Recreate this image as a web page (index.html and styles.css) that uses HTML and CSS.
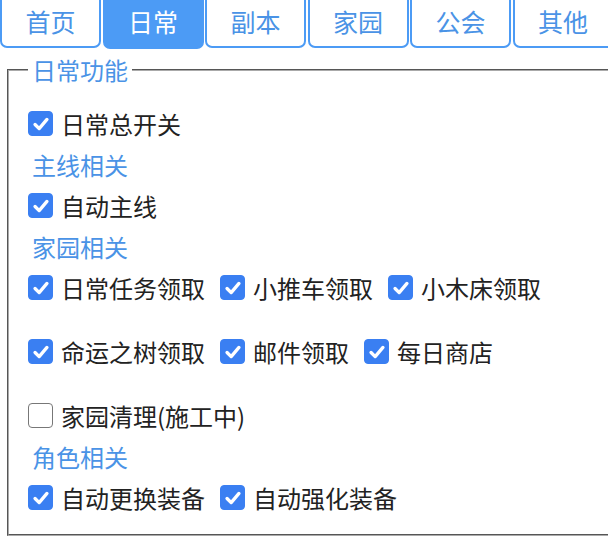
FILE: index.html
```html
<!DOCTYPE html>
<html lang="zh-CN">
<head>
    <meta charset="UTF-8">
    <meta name="viewport" content="width=device-width, initial-scale=1.0">
    <title>日常功能</title>
    <link rel="stylesheet" href="styles.css">
</head>
<body>
    <div class="tabs">
        <div class="tab">首页</div>
        <div class="tab active">日常</div>
        <div class="tab">副本</div>
        <div class="tab">家园</div>
        <div class="tab">公会</div>
        <div class="tab">其他</div>
    </div>

    <fieldset class="panel">
        <legend>日常功能</legend>

        <div class="row">
            <label class="check on"><span class="box"><svg viewBox="0 0 24 24"><polyline points="5.5,12.5 10,17 18.5,7"/></svg></span>日常总开关</label>
        </div>

        <div class="group-title">主线相关</div>
        <div class="row">
            <label class="check on"><span class="box"><svg viewBox="0 0 24 24"><polyline points="5.5,12.5 10,17 18.5,7"/></svg></span>自动主线</label>
        </div>

        <div class="group-title">家园相关</div>
        <div class="row wrap">
            <label class="check on"><span class="box"><svg viewBox="0 0 24 24"><polyline points="5.5,12.5 10,17 18.5,7"/></svg></span>日常任务领取</label>
            <label class="check on"><span class="box"><svg viewBox="0 0 24 24"><polyline points="5.5,12.5 10,17 18.5,7"/></svg></span>小推车领取</label>
            <label class="check on"><span class="box"><svg viewBox="0 0 24 24"><polyline points="5.5,12.5 10,17 18.5,7"/></svg></span>小木床领取</label>
            <label class="check on"><span class="box"><svg viewBox="0 0 24 24"><polyline points="5.5,12.5 10,17 18.5,7"/></svg></span>命运之树领取</label>
            <label class="check on"><span class="box"><svg viewBox="0 0 24 24"><polyline points="5.5,12.5 10,17 18.5,7"/></svg></span>邮件领取</label>
            <label class="check on"><span class="box"><svg viewBox="0 0 24 24"><polyline points="5.5,12.5 10,17 18.5,7"/></svg></span>每日商店</label>
            <label class="check"><span class="box"></span>家园清理(施工中)</label>
        </div>

        <div class="group-title">角色相关</div>
        <div class="row">
            <label class="check on"><span class="box"><svg viewBox="0 0 24 24"><polyline points="5.5,12.5 10,17 18.5,7"/></svg></span>自动更换装备</label>
            <label class="check on"><span class="box"><svg viewBox="0 0 24 24"><polyline points="5.5,12.5 10,17 18.5,7"/></svg></span>自动强化装备</label>
        </div>
    </fieldset>
</body>
</html>
```

FILE: styles.css
```css
:root {
    --tab-blue: #4c9bf5;
    --label-blue: #4a93e6;
    --check-blue: #3a7ff2;
    --text-color: #222;
}

html, body {
    overflow: hidden;
}

body {
    margin: 0;
    padding: 0;
    background: #fff;
    color: var(--text-color);
    font-family: "Noto Sans CJK SC", "Noto Sans", sans-serif;
}

.tabs {
    display: flex;
    gap: 1.5px;
    margin-top: -10px;
    width: 640px;
}

.tab {
    flex: 0 0 101px;
    height: 58px;
    box-sizing: border-box;
    border: 2px solid var(--tab-blue);
    border-radius: 0 0 7px 7px;
    color: var(--label-blue);
    font-size: 25px;
    display: flex;
    align-items: flex-end;
    justify-content: center;
    padding-bottom: 12px;
    line-height: 1;
}

.tab.active {
    background: var(--tab-blue);
    color: #fff;
    height: 59px;
    padding-bottom: 13px;
}

.panel {
    margin: 4px -40px 0 7px;
    padding: 16px 0 16px 19px;
    border: 2px groove #aaa;
    min-width: 0;
}

.panel legend {
    color: var(--label-blue);
    font-size: 24px;
    line-height: 34px;
    padding: 0 4px;
}

.row {
    display: flex;
    align-items: center;
    min-height: 41px;
}

.row.wrap {
    flex-wrap: wrap;
    row-gap: 23px;
}

.row.wrap .check {
    height: 41px;
}

.group-title {
    color: var(--label-blue);
    font-size: 24px;
    line-height: 41px;
    padding-left: 4px;
}

.check {
    display: flex;
    align-items: center;
    font-size: 24px;
    line-height: 1;
    margin-right: 15px;
}

.box {
    width: 25px;
    height: 25px;
    box-sizing: border-box;
    border-radius: 4px;
    border: 1.5px solid #777;
    margin-right: 8px;
    display: flex;
    align-items: center;
    justify-content: center;
}

.check.on .box {
    background: var(--check-blue);
    border-color: var(--check-blue);
}

.box svg {
    width: 22px;
    height: 22px;
    fill: none;
    stroke: #fff;
    stroke-width: 3.6;
    stroke-linecap: round;
    stroke-linejoin: round;
}
```
